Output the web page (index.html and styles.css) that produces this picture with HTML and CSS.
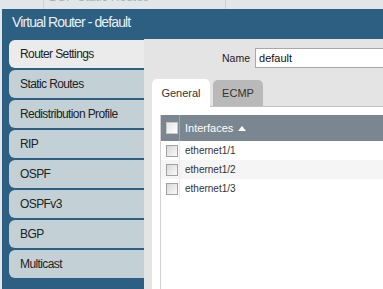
FILE: index.html
```html
<!DOCTYPE html>
<html lang="en">
<head>
    <meta charset="UTF-8">
    <meta name="viewport" content="width=device-width, initial-scale=1.0">
    <title>Virtual Router - default</title>
    <link rel="stylesheet" href="styles.css">
</head>
<body>
    <div class="backdrop">
        <span class="backdrop-cell first"></span>
        <span class="backdrop-cell second"><span class="ghost">BGP Static Routes</span></span>
    </div>

    <div class="dialog">
        <div class="titlebar">Virtual Router - default</div>
        <div class="dialog-body">
            <ul class="side-tabs">
                <li class="side-tab active">Router Settings</li>
                <li class="side-tab">Static Routes</li>
                <li class="side-tab">Redistribution Profile</li>
                <li class="side-tab">RIP</li>
                <li class="side-tab">OSPF</li>
                <li class="side-tab">OSPFv3</li>
                <li class="side-tab">BGP</li>
                <li class="side-tab">Multicast</li>
            </ul>

            <div class="content">
                <div class="name-row">
                    <label for="vr-name">Name</label>
                    <input id="vr-name" type="text" value="default">
                </div>

                <div class="tabs">
                    <span class="tab active">General</span>
                    <span class="tab">ECMP</span>
                </div>

                <div class="tab-panel">
                    <div class="grid">
                        <div class="grid-head">
                            <span class="cell check"><span class="checkbox"></span></span>
                            <span class="cell name">Interfaces <span class="sort"></span></span>
                        </div>
                        <div class="grid-row">
                            <span class="cell check"><span class="checkbox"></span></span>
                            <span class="cell name">ethernet1/1</span>
                        </div>
                        <div class="grid-row alt">
                            <span class="cell check"><span class="checkbox"></span></span>
                            <span class="cell name">ethernet1/2</span>
                        </div>
                        <div class="grid-row">
                            <span class="cell check"><span class="checkbox"></span></span>
                            <span class="cell name">ethernet1/3</span>
                        </div>
                    </div>
                </div>
            </div>
        </div>
    </div>
</body>
</html>
```

FILE: styles.css
```css
body {
    margin: 0;
    height: 289px;
    overflow: hidden;
    display: flex;
    flex-direction: column;
    background: #e2e6e9;
    font-family: 'Liberation Sans', Arial, sans-serif;
    color: #222;
}
.backdrop {
    height: 9px;
    display: flex;
    overflow: hidden;
    flex-shrink: 0;
}
.backdrop-cell.first {
    width: 43px;
    border-right: 1px solid #cdd2d6;
}
.backdrop-cell.second {
    width: 176px;
    padding-left: 5px;
    overflow: hidden;
    border-right: 1px solid #cdd2d6;
}
.ghost {
    display: block;
    font-size: 12px;
    line-height: 12px;
    margin-top: -9px;
    color: #a9b6a3;
}
.dialog {
    flex: 1;
    min-height: 0;
    margin-left: 2px;
    display: flex;
    flex-direction: column;
}
.titlebar {
    height: 30px;
    line-height: 27px;
    padding-left: 10px;
    background: #2c5f81;
    color: #e9f0f4;
    font-size: 14px;
    letter-spacing: -0.9px;
    flex-shrink: 0;
}
.dialog-body {
    flex: 1;
    min-height: 0;
    display: flex;
}
.side-tabs {
    list-style: none;
    margin: 0;
    padding: 1px 0 0 7px;
    width: 135px;
    flex-shrink: 0;
    background: #2c5f81;
    display: flex;
    flex-direction: column;
    gap: 2px;
}
.side-tab {
    height: 28px;
    line-height: 28px;
    padding-left: 11px;
    background: #c3d1d7;
    border-radius: 6px 0 0 6px;
    font-size: 12px;
    letter-spacing: -0.6px;
    white-space: nowrap;
}
.side-tab.active {
    background: #ebebeb;
}
.content {
    flex: 1;
    min-width: 0;
    overflow: hidden;
    background: #e4e4e4;
    padding: 9px 0 0 8px;
    display: flex;
    flex-direction: column;
}
.name-row {
    display: flex;
    align-items: center;
    gap: 5px;
    height: 20px;
    padding-left: 70px;
}
.name-row label {
    font-size: 10.5px;
    color: #222;
}
.name-row input {
    flex: 1;
    min-width: 0;
    height: 20px;
    box-sizing: border-box;
    margin: 0;
    padding: 0 3px;
    border: 1px solid #a9a9a9;
    border-right: none;
    font-family: 'Liberation Sans', Arial, sans-serif;
    font-size: 11px;
    color: #111;
}
.tabs {
    display: flex;
    align-items: flex-end;
    gap: 3px;
    margin-top: 11px;
    border-bottom: 1px solid #c2c2c2;
}
.tab {
    width: 50px;
    height: 26px;
    line-height: 26px;
    text-align: center;
    background: #b9b9b9;
    border-radius: 5px 5px 0 0;
    font-size: 11px;
    color: #333;
}
.tab.active {
    width: 58px;
    height: 28px;
    line-height: 28px;
    margin-bottom: -1px;
    background: #fff;
}
.tab-panel {
    flex: 1;
    background: #fff;
    padding: 8px 0 0 8px;
}
.grid {
    height: 100%;
    border-left: 1px solid #d2d2d2;
}
.grid-head {
    display: flex;
    height: 26px;
    background: #7a8790;
    color: #fff;
    font-size: 11px;
}
.grid-row {
    display: flex;
    height: 19px;
    font-size: 10px;
    color: #333;
}
.grid-row.alt {
    background: #f5f5f5;
}
.cell {
    display: flex;
    align-items: center;
}
.cell.check {
    width: 19px;
    box-sizing: border-box;
    padding-left: 5px;
    border-right: 1px solid #ececec;
}
.grid-head .cell.check {
    border-right-color: #9ba5ac;
}
.cell.name {
    padding-left: 5px;
}
.checkbox {
    width: 12px;
    height: 12px;
    box-sizing: border-box;
    border: 1px solid #a2a2a2;
    background: linear-gradient(135deg, #d8d8d8, #fafafa);
}
.grid-head .checkbox {
    border-color: #c8c8c8;
    background: linear-gradient(135deg, #e6e6e6, #fff);
}
.sort {
    display: inline-block;
    margin-left: 5px;
    border-left: 4px solid transparent;
    border-right: 4px solid transparent;
    border-bottom: 5px solid #fff;
}
```
